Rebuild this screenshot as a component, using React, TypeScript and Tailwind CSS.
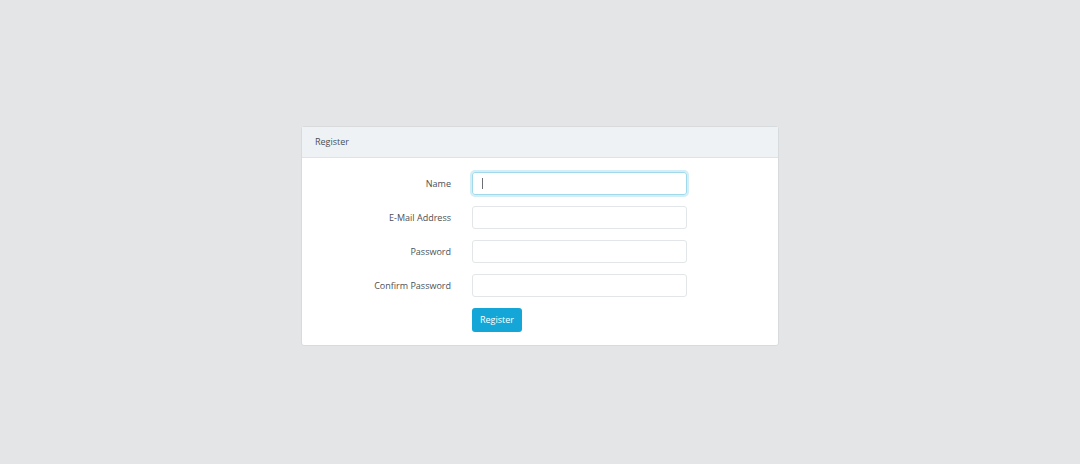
export default function App() {
  const fields = [
    { label: "Name", type: "text", focus: true },
    { label: "E-Mail Address", type: "email", focus: false },
    { label: "Password", type: "password", focus: false },
    { label: "Confirm Password", type: "password", focus: false },
  ];

  return (
    <main
      className="min-h-screen bg-[#e4e5e7] pt-[126px] text-[#4b4f54]"
      style={{ fontFamily: "'Open Sans', 'Noto Sans', sans-serif" }}
    >
      {/* Register card */}
      <div className="mx-auto w-[478px] rounded-[3px] border border-[#d8dbde] bg-white">
        <div className="flex h-[31px] items-center border-b border-[#dfe3e6] bg-[#eef2f5] px-[13px] text-[9px]">
          Register
        </div>

        <div className="flex flex-col gap-[11px] pt-[14px] pb-[13px]">
          {fields.map((f) => (
            <div key={f.label} className="flex items-center">
              <label className="w-[149px] text-right text-[9px]">{f.label}</label>
              <div
                className={
                  f.focus
                    ? "ml-[21px] flex h-[23px] w-[215px] items-center rounded-[3px] border border-[#9fd9ea] px-[9px] shadow-[0_0_0_2px_#d3eef6]"
                    : "ml-[21px] h-[23px] w-[215px] rounded-[3px] border border-[#e3e6e8]"
                }
              >
                {f.focus && <span className="h-[11px] w-px bg-[#6b6f73]" />}
              </div>
            </div>
          ))}

          <div className="flex">
            <button className="ml-[170px] h-[24px] w-[50px] rounded-[3px] bg-[#14a6d7] text-[9px] text-white">
              Register
            </button>
          </div>
        </div>
      </div>
    </main>
  );
}
